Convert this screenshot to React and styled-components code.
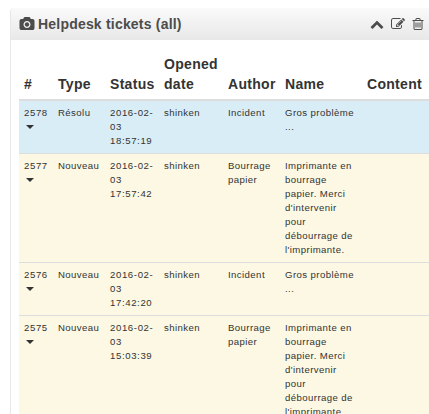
import React from "react";
import styled, { createGlobalStyle } from "styled-components";

const GlobalStyle = createGlobalStyle`
  html, body { margin: 0; background: #fff; overflow: hidden; }
  * { box-sizing: border-box; }
  body { font-family: "Liberation Sans", Arial, sans-serif; color: #333; }
`;

const Viewport = styled.div`
  height: 414px;
  overflow: hidden;
  padding: 8px 0 0 10px;
`;

const Panel = styled.section`
  width: 440px;
  border-left: 1px solid #e7e7e7;
  border-top-left-radius: 4px;
`;

const PanelHeader = styled.header`
  display: flex;
  align-items: center;
  width: 418px;
  height: 32px;
  padding: 0 5px 0 8px;
  color: #4c4c4c;
  border-top-left-radius: 3px;
  background: linear-gradient(to bottom, #fafafa, #e8e8e8);
`;

const Title = styled.h2`
  margin: 0 auto 0 3px;
  font-size: 14px;
  line-height: 20px;
  font-weight: bold;
  letter-spacing: 0.2px;
  white-space: nowrap;
`;

const Actions = styled.div`
  display: flex;
  align-items: center;
  gap: 7px;
`;

const Icon = styled.svg`
  display: block;
  flex: none;
  width: ${(p) => p.$width}px;
  height: 14px;
  fill: currentColor;
`;

const Table = styled.table`
  width: 415px;
  margin: 13px 0 0 8px;
  table-layout: fixed;
  border-collapse: separate;
  border-spacing: 0;
`;

const Column = styled.col`
  width: ${(p) => p.$width}px;
`;

const HeadCell = styled.th`
  height: 48px;
  padding: 1px 0 5px 5px;
  border-bottom: 2px solid #ddd;
  text-align: left;
  vertical-align: bottom;
  font-size: 14px;
  line-height: 20px;
  letter-spacing: 0.3px;
`;

const Row = styled.tr`
  background: ${(p) => (p.$solved ? "#d9edf7" : "#fcf8e3")};
`;

const Cell = styled.td`
  padding: 5px 0 5px 5px;
  border-top: ${(p) => (p.$first ? "0" : "1px solid #ddd")};
  vertical-align: top;
  font-size: 9.6px;
  line-height: 14px;
  letter-spacing: ${(p) => (p.$numeric ? "0.62px" : "0.42px")};
  white-space: pre-line;
`;

const Caret = styled.span`
  display: block;
  width: 8px;
  margin: 5px 0 0 2px;
  border-top: 4px solid #333;
  border-left: 4px solid transparent;
  border-right: 4px solid transparent;
`;

const icons = {
  camera: "M896 672q119 0 203.5 84.5t84.5 203.5-84.5 203.5-203.5 84.5-203.5-84.5-84.5-203.5 84.5-203.5 203.5-84.5zm704-416q106 0 181 75t75 181v896q0 106-75 181t-181 75h-1408q-106 0-181-75t-75-181v-896q0-106 75-181t181-75h224l51-136q19-49 69.5-84.5t103.5-35.5h512q53 0 103.5 35.5t69.5 84.5l51 136h224zm-704 1152q185 0 316.5-131.5t131.5-316.5-131.5-316.5-316.5-131.5-316.5 131.5-131.5 316.5 131.5 316.5 316.5 131.5z",
  up: "M1683 1331l-166 165q-19 19-45 19t-45-19l-531-531-531 531q-19 19-45 19t-45-19l-166-165q-19-19-19-45.5t19-45.5l742-741q19-19 45-19t45 19l742 741q19 19 19 45.5t-19 45.5z",
  edit: "M888 1184l116-116-152-152-116 116v56h96v96h56zm440-720q-16-16-33 1l-350 350q-17 17-1 33t33-1l350-350q17-17 1-33zm80 594v190q0 119-84.5 203.5t-203.5 84.5h-832q-119 0-203.5-84.5t-84.5-203.5v-832q0-119 84.5-203.5t203.5-84.5h832q63 0 117 25 15 7 18 23 3 17-9 29l-49 49q-14 14-32 8-23-6-45-6h-832q-66 0-113 47t-47 113v832q0 66 47 113t113 47h832q66 0 113-47t47-113v-126q0-13 9-22l64-64q15-15 35-7t20 29zm-96-738l288 288-672 672h-288v-288zm444 132l-92 92-288-288 92-92q28-28 68-28t68 28l152 152q28 28 28 68t-28 68z",
  trash: "M704 736v576q0 14-9 23t-23 9h-64q-14 0-23-9t-9-23v-576q0-14 9-23t23-9h64q14 0 23 9t9 23zm256 0v576q0 14-9 23t-23 9h-64q-14 0-23-9t-9-23v-576q0-14 9-23t23-9h64q14 0 23 9t9 23zm256 0v576q0 14-9 23t-23 9h-64q-14 0-23-9t-9-23v-576q0-14 9-23t23-9h64q14 0 23 9t9 23zm128 724v-948h-896v948q0 22 7 40.5t14.5 27 10.5 8.5h832q3 0 10.5-8.5t14.5-27 7-40.5zm-672-1076h448l-48-117q-7-9-17-11h-317q-10 2-17 11zm928 32v64q0 14-9 23t-23 9h-96v948q0 83-47 143.5t-113 60.5h-832q-66 0-113-58.5t-47-141.5v-952h-96q-14 0-23-9t-9-23v-64q0-14 9-23t23-9h309l70-167q15-37 54-63t79-26h320q40 0 79 26t54 63l70 167h309q14 0 23 9t9 23z",
};

const columns = [
  ["#", 34], ["Type", 52], ["Status", 54], ["Opened date", 64],
  ["Author", 57], ["Name", 82], ["Content", 72],
];

const problem = "Gros problème\n...";
const jam = "Imprimante en\nbourrage\npapier. Merci\nd'intervenir\npour\ndébourrage de\nl'imprimante.";

const tickets = [
  { id: 2578, type: "Résolu", time: "18:57:19", author: "Incident", name: problem, solved: true },
  { id: 2577, type: "Nouveau", time: "17:57:42", author: "Bourrage\npapier", name: jam },
  { id: 2576, type: "Nouveau", time: "17:42:20", author: "Incident", name: problem },
  { id: 2575, type: "Nouveau", time: "15:03:39", author: "Bourrage\npapier", name: jam },
];

function Glyph({ name, width = 14, viewBox = "0 0 1792 1792" }) {
  return (
    <Icon $width={width} viewBox={viewBox} aria-hidden="true">
      <path d={icons[name]} />
    </Icon>
  );
}

function TicketRow({ ticket, first }) {
  return (
    <Row $solved={ticket.solved}>
      <Cell $first={first} $numeric>{ticket.id}<Caret /></Cell>
      <Cell $first={first}>{ticket.type}</Cell>
      <Cell $first={first} $numeric>{`2016-02-\n03\n${ticket.time}`}</Cell>
      <Cell $first={first}>shinken</Cell>
      <Cell $first={first}>{ticket.author}</Cell>
      <Cell $first={first}>{ticket.name}</Cell>
      <Cell $first={first} />
    </Row>
  );
}

export default function App() {
  return (
    <Viewport>
      <GlobalStyle />
      <Panel>
        <PanelHeader>
          <Glyph name="camera" width={16} viewBox="-64 0 1920 1792" />
          <Title>Helpdesk tickets (all)</Title>
          <Actions>
            <Glyph name="up" />
            <Glyph name="edit" />
            <Glyph name="trash" width={12} viewBox="128 0 1536 1792" />
          </Actions>
        </PanelHeader>
        <Table>
          <colgroup>
            {columns.map(([label, width]) => <Column key={label} $width={width} />)}
          </colgroup>
          <thead>
            <tr>{columns.map(([label]) => <HeadCell key={label}>{label}</HeadCell>)}</tr>
          </thead>
          <tbody>
            {tickets.map((t, i) => <TicketRow key={t.id} ticket={t} first={i === 0} />)}
          </tbody>
        </Table>
      </Panel>
    </Viewport>
  );
}
